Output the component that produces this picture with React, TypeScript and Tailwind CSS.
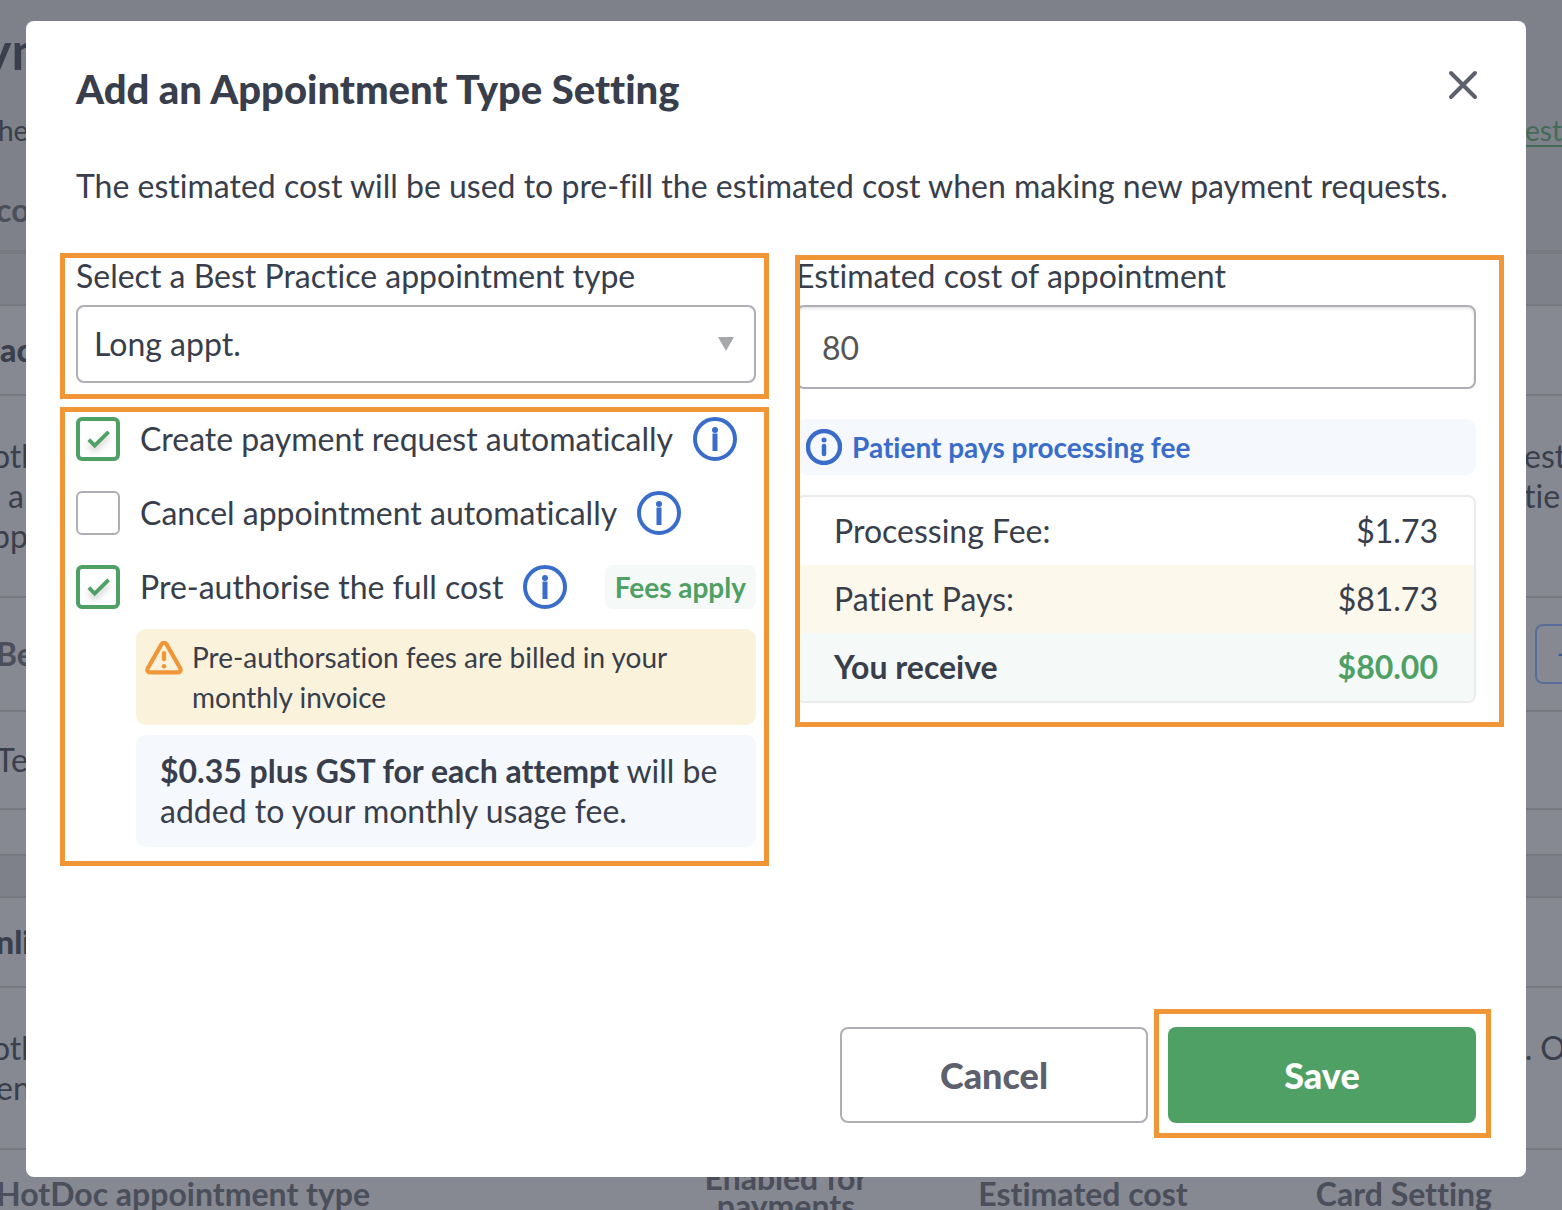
import { useState } from "react";
import type { ReactNode } from "react";

function InfoIcon() {
  return (
    <svg viewBox="0 0 44 44" className="size-11" fill="none" aria-hidden="true">
      <circle cx="22" cy="22" r="20" stroke="#3a6cca" strokeWidth="4" />
      <circle cx="22" cy="13" r="3" fill="#3a6cca" />
      <rect x="19.5" y="16.5" width="5" height="17.5" fill="#3a6cca" />
    </svg>
  );
}

function InfoBadgeIcon() {
  return (
    <svg viewBox="0 0 36 36" className="size-9 shrink-0" fill="none" aria-hidden="true">
      <circle cx="18" cy="18" r="16" stroke="#3a6cca" strokeWidth="4.4" />
      <circle cx="18" cy="11" r="2.5" fill="#3a6cca" />
      <path d="M18 17v8" stroke="#3a6cca" strokeWidth="4.5" strokeLinecap="round" />
    </svg>
  );
}

function WarningIcon() {
  return (
    <svg viewBox="0 0 40 40" className="size-10 shrink-0" fill="none" aria-hidden="true">
      <path
        d="M17.4 7.4 3.8 31.2c-1.3 2.2.1 4.2 2.4 4.2h27.6c2.3 0 3.7-2 2.4-4.2L22.6 7.4c-1.3-2-3.9-2-5.2 0Z"
        stroke="#f09637"
        strokeWidth="4.2"
        strokeLinejoin="round"
      />
      <path d="M20 16.2v6" stroke="#f09637" strokeWidth="4.2" strokeLinecap="round" />
      <circle cx="20" cy="29.2" r="2.3" fill="#f09637" />
    </svg>
  );
}

function Option({
  id,
  label,
  defaultChecked = false,
  children,
}: {
  id: string;
  label: string;
  defaultChecked?: boolean;
  children?: ReactNode;
}) {
  return (
    <div className="flex items-center gap-5">
      <span className="relative size-11 shrink-0">
        <input
          id={id}
          type="checkbox"
          defaultChecked={defaultChecked}
          className="peer block size-11 appearance-none rounded-md border-2 border-[#aeaeb5] bg-white checked:border-4 checked:border-[#4fa065]"
        />
        <svg
          viewBox="0 0 44 44"
          className="pointer-events-none absolute inset-0 hidden size-11 drop-shadow-[0_4px_3px_rgba(0,0,0,0.22)] peer-checked:block"
          fill="none"
          aria-hidden="true"
        >
          <path d="M12.8 22.6 18.7 28.6 32.6 14.8" stroke="#4fa065" strokeWidth="3.8" />
        </svg>
      </span>
      <label htmlFor={id} className="whitespace-nowrap">
        {label}
      </label>
      <button type="button" aria-label={"About: " + label} className="shrink-0">
        <InfoIcon />
      </button>
      {children}
    </div>
  );
}

function Backdrop() {
  return (
    <div
      aria-hidden="true"
      className="absolute inset-0 flex flex-col overflow-hidden bg-[#868991] text-[32px] leading-10 whitespace-nowrap text-[#393f4c]"
    >
      <div className="h-[254px] shrink-0 border-b-4 border-[#777981] bg-[#7e8189] pt-[18px]">
        <div className="-ml-4 text-[52px] leading-[64px] font-bold">ym</div>
        <div className="-ml-0.5 flex justify-between pt-7 text-[28px]">
          <span>he</span>
          <a href="#requests" className="underline decoration-2 underline-offset-4 text-[#436c57]">
            est
          </a>
        </div>
        <div className="-ml-1 pt-10 font-bold text-[#4b4e5b]">co</div>
      </div>
      <div className="h-[52px] shrink-0 border-b-2 border-[#777981] bg-[#7e8189]" />
      <div className="h-[90px] shrink-0 border-b-2 border-[#777981] pt-6 font-black">ac</div>
      <div className="flex h-[202px] shrink-0 justify-between border-b-2 border-[#777981] pt-10">
        <div className="-ml-2">
          <div>oth</div>
          <div className="pl-4">a</div>
          <div>ppo</div>
        </div>
        <div className="-mr-4">
          <div>est</div>
          <div>tien</div>
        </div>
      </div>
      <div className="flex h-[114px] shrink-0 items-center justify-between border-b-2 border-[#777981]">
        <span className="-ml-1 font-bold text-[#4b4e5b]">Be</span>
        <span className="-mr-8 flex h-[60px] w-[59px] items-center rounded-lg border-2 border-[#566d99] pl-5 text-[#37589b]">
          +
        </span>
      </div>
      <div className="flex h-[98px] shrink-0 items-center border-b-2 border-[#777981]">
        <span className="-ml-1">Te</span>
      </div>
      <div className="h-[46px] shrink-0 border-b-2 border-[#777981]" />
      <div className="h-[42px] shrink-0 border-b-2 border-[#777981] bg-[#7e8189]" />
      <div className="flex h-[90px] shrink-0 items-center border-b-2 border-[#777981] font-black">
        <span className="-ml-1">nli</span>
      </div>
      <div className="flex h-[162px] shrink-0 justify-between border-b-2 border-[#777981] pt-10">
        <div className="-ml-2">
          <div>oth</div>
          <div className="pl-1">en</div>
        </div>
        <div className="-mr-1">. O</div>
      </div>
      <div className="flex shrink-0 font-bold text-[#4b4e5b]">
        <div className="-ml-1 w-[640px] pt-6">HotDoc appointment type</div>
        <div className="w-[300px] pt-3.5 text-center leading-7">
          Enabled for
          <br />
          payments
        </div>
        <div className="w-[294px] pt-6 text-center">Estimated cost</div>
        <div className="flex-1 pt-6 pr-[70px] text-right">Card Setting</div>
      </div>
    </div>
  );
}

export default function App() {
  const [cost, setCost] = useState("80");

  return (
    <div className="relative min-h-screen overflow-hidden pt-[21px] pr-9 pb-[33px] pl-[26px] font-['Lato',sans-serif] text-[32px] leading-10 text-[#383e4b] [font-variant-ligatures:none]">
      <Backdrop />
      <div
        role="dialog"
        aria-labelledby="dialog-title"
        className="relative rounded-lg bg-white px-[50px] pt-11 pb-[54px]"
      >
        <div className="flex items-start justify-between">
          <h1
            id="dialog-title"
            className="font-['Lato_Black','Lato',sans-serif] text-[40px] leading-[48px] font-black"
          >
            Add an Appointment Type Setting
          </h1>
          <button type="button" aria-label="Close" className="-mr-[3px] pt-1">
            <svg viewBox="0 0 32 32" className="size-8" fill="none" aria-hidden="true">
              <path
                d="M4 4 28 28M28 4 4 28"
                stroke="#5c616d"
                strokeWidth="4"
                strokeLinecap="round"
              />
            </svg>
          </button>
        </div>
        <p className="pt-[53px]">
          The estimated cost will be used to pre-fill the estimated cost when making new payment requests.
        </p>

        <div className="grid grid-cols-2 gap-x-10 pt-[50px]">
          <div>
            <section className="relative">
              <label htmlFor="appointment-type" className="block">
                Select a Best Practice appointment type
              </label>
              <div className="relative mt-[9px]">
                <select
                  id="appointment-type"
                  className="block h-[78px] w-full appearance-none rounded-lg border-2 border-[#aeaeb5] bg-white px-4"
                >
                  <option>Long appt.</option>
                </select>
                <svg
                  viewBox="0 0 16 14"
                  className="pointer-events-none absolute top-8 right-[22px] h-3.5 w-4"
                  aria-hidden="true"
                >
                  <path d="M0 0h16L8 14Z" fill="#a6a7ab" />
                </svg>
              </div>
              <div className="pointer-events-none absolute -top-[3px] -right-[13px] -bottom-4 -left-4 border-5 border-[#f09637]" />
            </section>

            <section className="relative mt-[34px]">
              <div className="flex flex-col gap-[30px]">
                <Option id="create-request" label="Create payment request automatically" defaultChecked />
                <Option id="cancel-appointment" label="Cancel appointment automatically" />
                <Option id="pre-authorise" label="Pre-authorise the full cost" defaultChecked>
                  <span className="ml-auto rounded-lg bg-[#f5f9f7] px-2.5 py-0.5 text-[28px] font-bold whitespace-nowrap text-[#4fa065]">
                    Fees apply
                  </span>
                </Option>
              </div>
              <div className="mt-5 ml-[60px] flex gap-2 rounded-[10px] bg-[#fbf2dc] p-2 text-[28px]">
                <WarningIcon />
                <p>Pre-authorsation fees are billed in your monthly invoice</p>
              </div>
              <p className="mt-2.5 ml-[60px] rounded-[10px] bg-[#f5f8fd] px-6 py-4">
                <strong className="font-bold">$0.35 plus GST for each attempt</strong> will be added to your
                monthly usage fee.
              </p>
              <div className="pointer-events-none absolute -top-2.5 -right-[13px] -bottom-[19px] -left-4 border-5 border-[#f09637]" />
            </section>
          </div>

          <section className="relative self-start">
            <label htmlFor="estimated-cost" className="block">
              Estimated cost of appointment
            </label>
            <input
              id="estimated-cost"
              type="text"
              value={cost}
              onChange={(event) => setCost(event.target.value)}
              className="mt-[9px] block h-[84px] w-full rounded-lg border-2 border-[#aeaeb5] bg-white px-6 text-[#555555] shadow-[inset_0_2px_3px_rgba(0,0,0,0.1)]"
            />
            <div className="mt-[30px] flex h-14 items-center gap-2.5 rounded-[10px] bg-[#f5f8fd] px-2.5 text-[28px] font-bold text-[#3a6cca]">
              <InfoBadgeIcon />
              Patient pays processing fee
            </div>
            <div className="mt-5 overflow-hidden rounded-lg border-2 border-[#eaebec]">
              <table className="w-full">
                <tbody>
                  <tr className="h-[68px]">
                    <th scope="row" className="pl-9 text-left font-normal">
                      Processing Fee:
                    </th>
                    <td className="pr-9 text-right">$1.73</td>
                  </tr>
                  <tr className="h-[68px] bg-[#fcf8ec]">
                    <th scope="row" className="pl-9 text-left font-normal">
                      Patient Pays:
                    </th>
                    <td className="pr-9 text-right">$81.73</td>
                  </tr>
                  <tr className="h-[68px] bg-[#f5f9f7]">
                    <th scope="row" className="pl-9 text-left font-bold">
                      You receive
                    </th>
                    <td className="pr-9 text-right font-bold text-[#4fa065]">$80.00</td>
                  </tr>
                </tbody>
              </table>
            </div>
            <div className="pointer-events-none absolute -top-px -right-7 -bottom-6 -left-px border-5 border-[#f09637]" />
          </section>
        </div>

        <div className="flex justify-end gap-5 pt-[180px] font-['Lato_Black','Lato',sans-serif] text-[36px] font-black">
          <button type="button" className="h-24 w-[308px] rounded-lg border-2 border-[#aeaeb5] text-[#5c616d]">
            Cancel
          </button>
          <div className="relative">
            <button type="button" className="h-24 w-[308px] rounded-lg bg-[#4fa065] text-white">
              Save
            </button>
            <div className="pointer-events-none absolute -top-[18px] -right-[15px] -bottom-[15px] -left-3.5 border-5 border-[#f09637]" />
          </div>
        </div>
      </div>
    </div>
  );
}
